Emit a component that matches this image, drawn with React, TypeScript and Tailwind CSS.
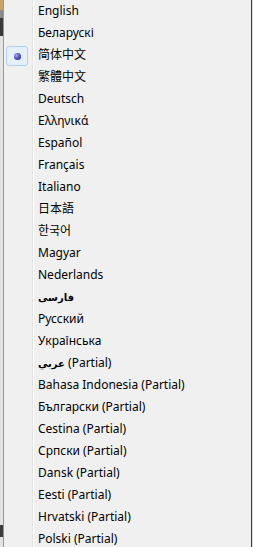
const LANGS: { label: string; rtl?: string; checked?: boolean }[] = [
  { label: 'English' },
  { label: 'Беларускі' },
  { label: '简体中文', checked: true },
  { label: '繁體中文' },
  { label: 'Deutsch' },
  { label: 'Ελληνικά' },
  { label: 'Español' },
  { label: 'Français' },
  { label: 'Italiano' },
  { label: '日本語' },
  { label: '한국어' },
  { label: 'Magyar' },
  { label: 'Nederlands' },
  { label: '', rtl: 'فارسی' },
  { label: 'Русский' },
  { label: 'Українська' },
  { label: ' (Partial)', rtl: 'عربي' },
  { label: 'Bahasa Indonesia (Partial)' },
  { label: 'Български (Partial)' },
  { label: 'Cestina (Partial)' },
  { label: 'Српски (Partial)' },
  { label: 'Dansk (Partial)' },
  { label: 'Eesti (Partial)' },
  { label: 'Hrvatski (Partial)' },
  { label: 'Polski (Partial)' },
]

function RadioMark() {
  return (
    <div className="ml-[2px] mt-[1px] flex h-[20px] w-[22px] items-center justify-center rounded-[3px] border border-[#aed3ec] bg-[#e6f0fa]">
      <div className="h-[7px] w-[7px] rounded-full bg-[radial-gradient(circle_at_35%_35%,#a9a9f0,#4646b4_55%,#24246e)]" />
    </div>
  )
}

export default function App() {
  return (
    <div className="flex h-[547px] w-[253px] overflow-hidden bg-[#f0f0f0]">
      {/* whatever sits behind the menu */}
      <div className="flex w-[3px] flex-shrink-0 flex-col bg-[#e4e4e4]">
        <div className="h-[10px] bg-[#c8a46a]" />
        <div className="h-[8px] bg-[#8a8a8a]" />
        <div className="h-[18px] bg-[#3a3a3a]" />
        <div className="flex-1" />
        <div className="h-[12px] bg-[#3c3c3c]" />
        <div className="h-[10px]" />
      </div>

      <div
        className="flex flex-1 flex-col border-l border-r border-l-[#979797] border-r-[#3f3f3f] bg-[#f0f0f0]"
        style={{ fontFamily: '"Noto Sans", "Noto Sans CJK SC", "DejaVu Sans", sans-serif' }}
      >
        {LANGS.map((l, i) => (
          <div key={i} className="flex h-[22px] flex-shrink-0">
            <div className="flex w-[28px] flex-shrink-0 items-start pt-[1px]">
              {l.checked && <RadioMark />}
            </div>
            <div className="w-[2px] flex-shrink-0 border-l border-r border-l-[#e2e3e3] border-r-white" />
            <div className="flex items-center pl-[4px] text-[12px] text-black">
              {l.rtl && <span className="text-[10px] font-bold" dir="rtl">{l.rtl}</span>}
              {l.label && <span className="whitespace-pre">{l.label}</span>}
            </div>
          </div>
        ))}
      </div>
      <div className="w-px flex-shrink-0 bg-[#d6d6d6]" />
    </div>
  )
}
